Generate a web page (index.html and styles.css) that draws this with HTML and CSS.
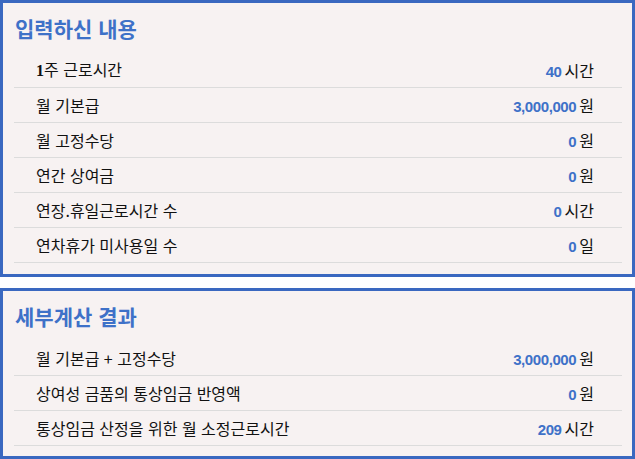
FILE: index.html
```html
<!DOCTYPE html>
<html lang="ko">
<head>
<meta charset="utf-8">
<link rel="stylesheet" href="styles.css">
</head>
<body>
<section class="panel">
  <h2 class="panel-title">입력하신 내용</h2>
  <ul class="rows">
    <li class="row"><span class="label"><b class="num-lead">1</b>주 근로시간</span><span class="val"><b class="num">40</b>시간</span></li>
    <li class="row"><span class="label">월 기본급</span><span class="val"><b class="num">3,000,000</b>원</span></li>
    <li class="row"><span class="label">월 고정수당</span><span class="val"><b class="num">0</b>원</span></li>
    <li class="row"><span class="label">연간 상여금</span><span class="val"><b class="num">0</b>원</span></li>
    <li class="row"><span class="label">연장.휴일근로시간 수</span><span class="val"><b class="num">0</b>시간</span></li>
    <li class="row"><span class="label">연차휴가 미사용일 수</span><span class="val"><b class="num">0</b>일</span></li>
  </ul>
</section>
<section class="panel panel-2">
  <h2 class="panel-title">세부계산 결과</h2>
  <ul class="rows">
    <li class="row"><span class="label">월 기본급 + 고정수당</span><span class="val"><b class="num">3,000,000</b>원</span></li>
    <li class="row"><span class="label">상여성 금품의 통상임금 반영액</span><span class="val"><b class="num">0</b>원</span></li>
    <li class="row"><span class="label">통상임금 산정을 위한 월 소정근로시간</span><span class="val"><b class="num">209</b>시간</span></li>
  </ul>
</section>
</body>
</html>
```
FILE: styles.css
```css
html, body {
  margin: 0;
  padding: 0;
  background: #ffffff;
}
body {
  font-family: "Noto Sans CJK KR", "Noto Sans", sans-serif;
  color: #111111;
}
.panel {
  box-sizing: border-box;
  width: 635px;
  border: 3px solid #3a68c0;
  background: #f7f2f2;
  padding: 0 10px 11px 11px;
}
.panel-2 {
  margin-top: 11px;
  padding-bottom: 10px;
}
.panel-title {
  margin: 0;
  height: 50px;
  line-height: 51px;
  padding-left: 1px;
  font-size: 21px;
  font-weight: 700;
  color: #3e71c8;
}
.rows {
  list-style: none;
  margin: 0;
  padding: 0;
}
.row {
  display: flex;
  justify-content: space-between;
  align-items: center;
  height: 34px;
  border-bottom: 1px solid #dcdcdc;
  padding: 0 28px 0 22px;
  font-size: 16px;
}
.label {
  line-height: 34px;
}
.num-lead {
  font-family: "Liberation Serif", serif;
  font-weight: 700;
  font-size: 16px;
}
.val {
  display: flex;
  align-items: baseline;
  gap: 3px;
}
.num {
  font-family: "Liberation Sans", sans-serif;
  font-weight: 700;
  font-size: 15px;
  letter-spacing: -0.4px;
  color: #3e71c8;
}
```
